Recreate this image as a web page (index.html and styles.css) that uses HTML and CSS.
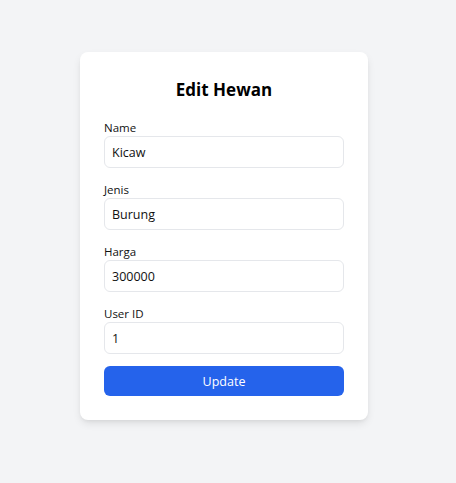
FILE: index.html
```html
<!DOCTYPE html>
<html>
<head>
<meta charset="utf-8">
<link rel="stylesheet" href="styles.css">
</head>
<body>
<div class="page">
  <form class="card">
    <h1 class="title">Edit Hewan</h1>
    <div class="field">
      <label class="label">Name</label>
      <input class="input" type="text" value="Kicaw">
    </div>
    <div class="field">
      <label class="label">Jenis</label>
      <input class="input" type="text" value="Burung">
    </div>
    <div class="field">
      <label class="label">Harga</label>
      <input class="input" type="text" value="300000">
    </div>
    <div class="field last">
      <label class="label">User ID</label>
      <input class="input" type="text" value="1">
    </div>
    <button class="button" type="button">Update</button>
  </form>
</div>
</body>
</html>
```
FILE: styles.css
```css
* { box-sizing: border-box; }
html, body { margin: 0; padding: 0; }
body {
  background: #f3f4f6;
  font-family: "Open Sans", "Noto Sans", sans-serif;
  color: #111827;
  width: 456px;
  height: 483px;
}
.page {
  display: flex;
  justify-content: center;
  padding: 52px 8px 0 0;
}
.card {
  width: 288px;
  background: #ffffff;
  border-radius: 8px;
  padding: 24px;
  box-shadow: 0 4px 8px -1px rgba(0,0,0,0.10), 0 2px 4px -2px rgba(0,0,0,0.08);
  display: flex;
  flex-direction: column;
}
.title {
  margin: 0 0 16px 0;
  height: 28px;
  line-height: 28px;
  font-size: 17px;
  font-weight: 700;
  text-align: center;
  color: #000;
}
.field {
  display: flex;
  flex-direction: column;
  margin-bottom: 14px;
}
.field.last { margin-bottom: 12px; }
.label {
  height: 16px;
  line-height: 16px;
  font-size: 11.5px;
  color: #111;
}
.input {
  height: 32px;
  border: 1px solid #e5e7eb;
  border-radius: 6px;
  padding: 0 7px;
  font-family: inherit;
  font-size: 12.5px;
  color: #111;
  background: #fff;
  outline: none;
}
.button {
  height: 30px;
  border: none;
  border-radius: 6px;
  background: #2563eb;
  color: #fff;
  font-family: inherit;
  font-size: 12.5px;
  cursor: pointer;
}
```
